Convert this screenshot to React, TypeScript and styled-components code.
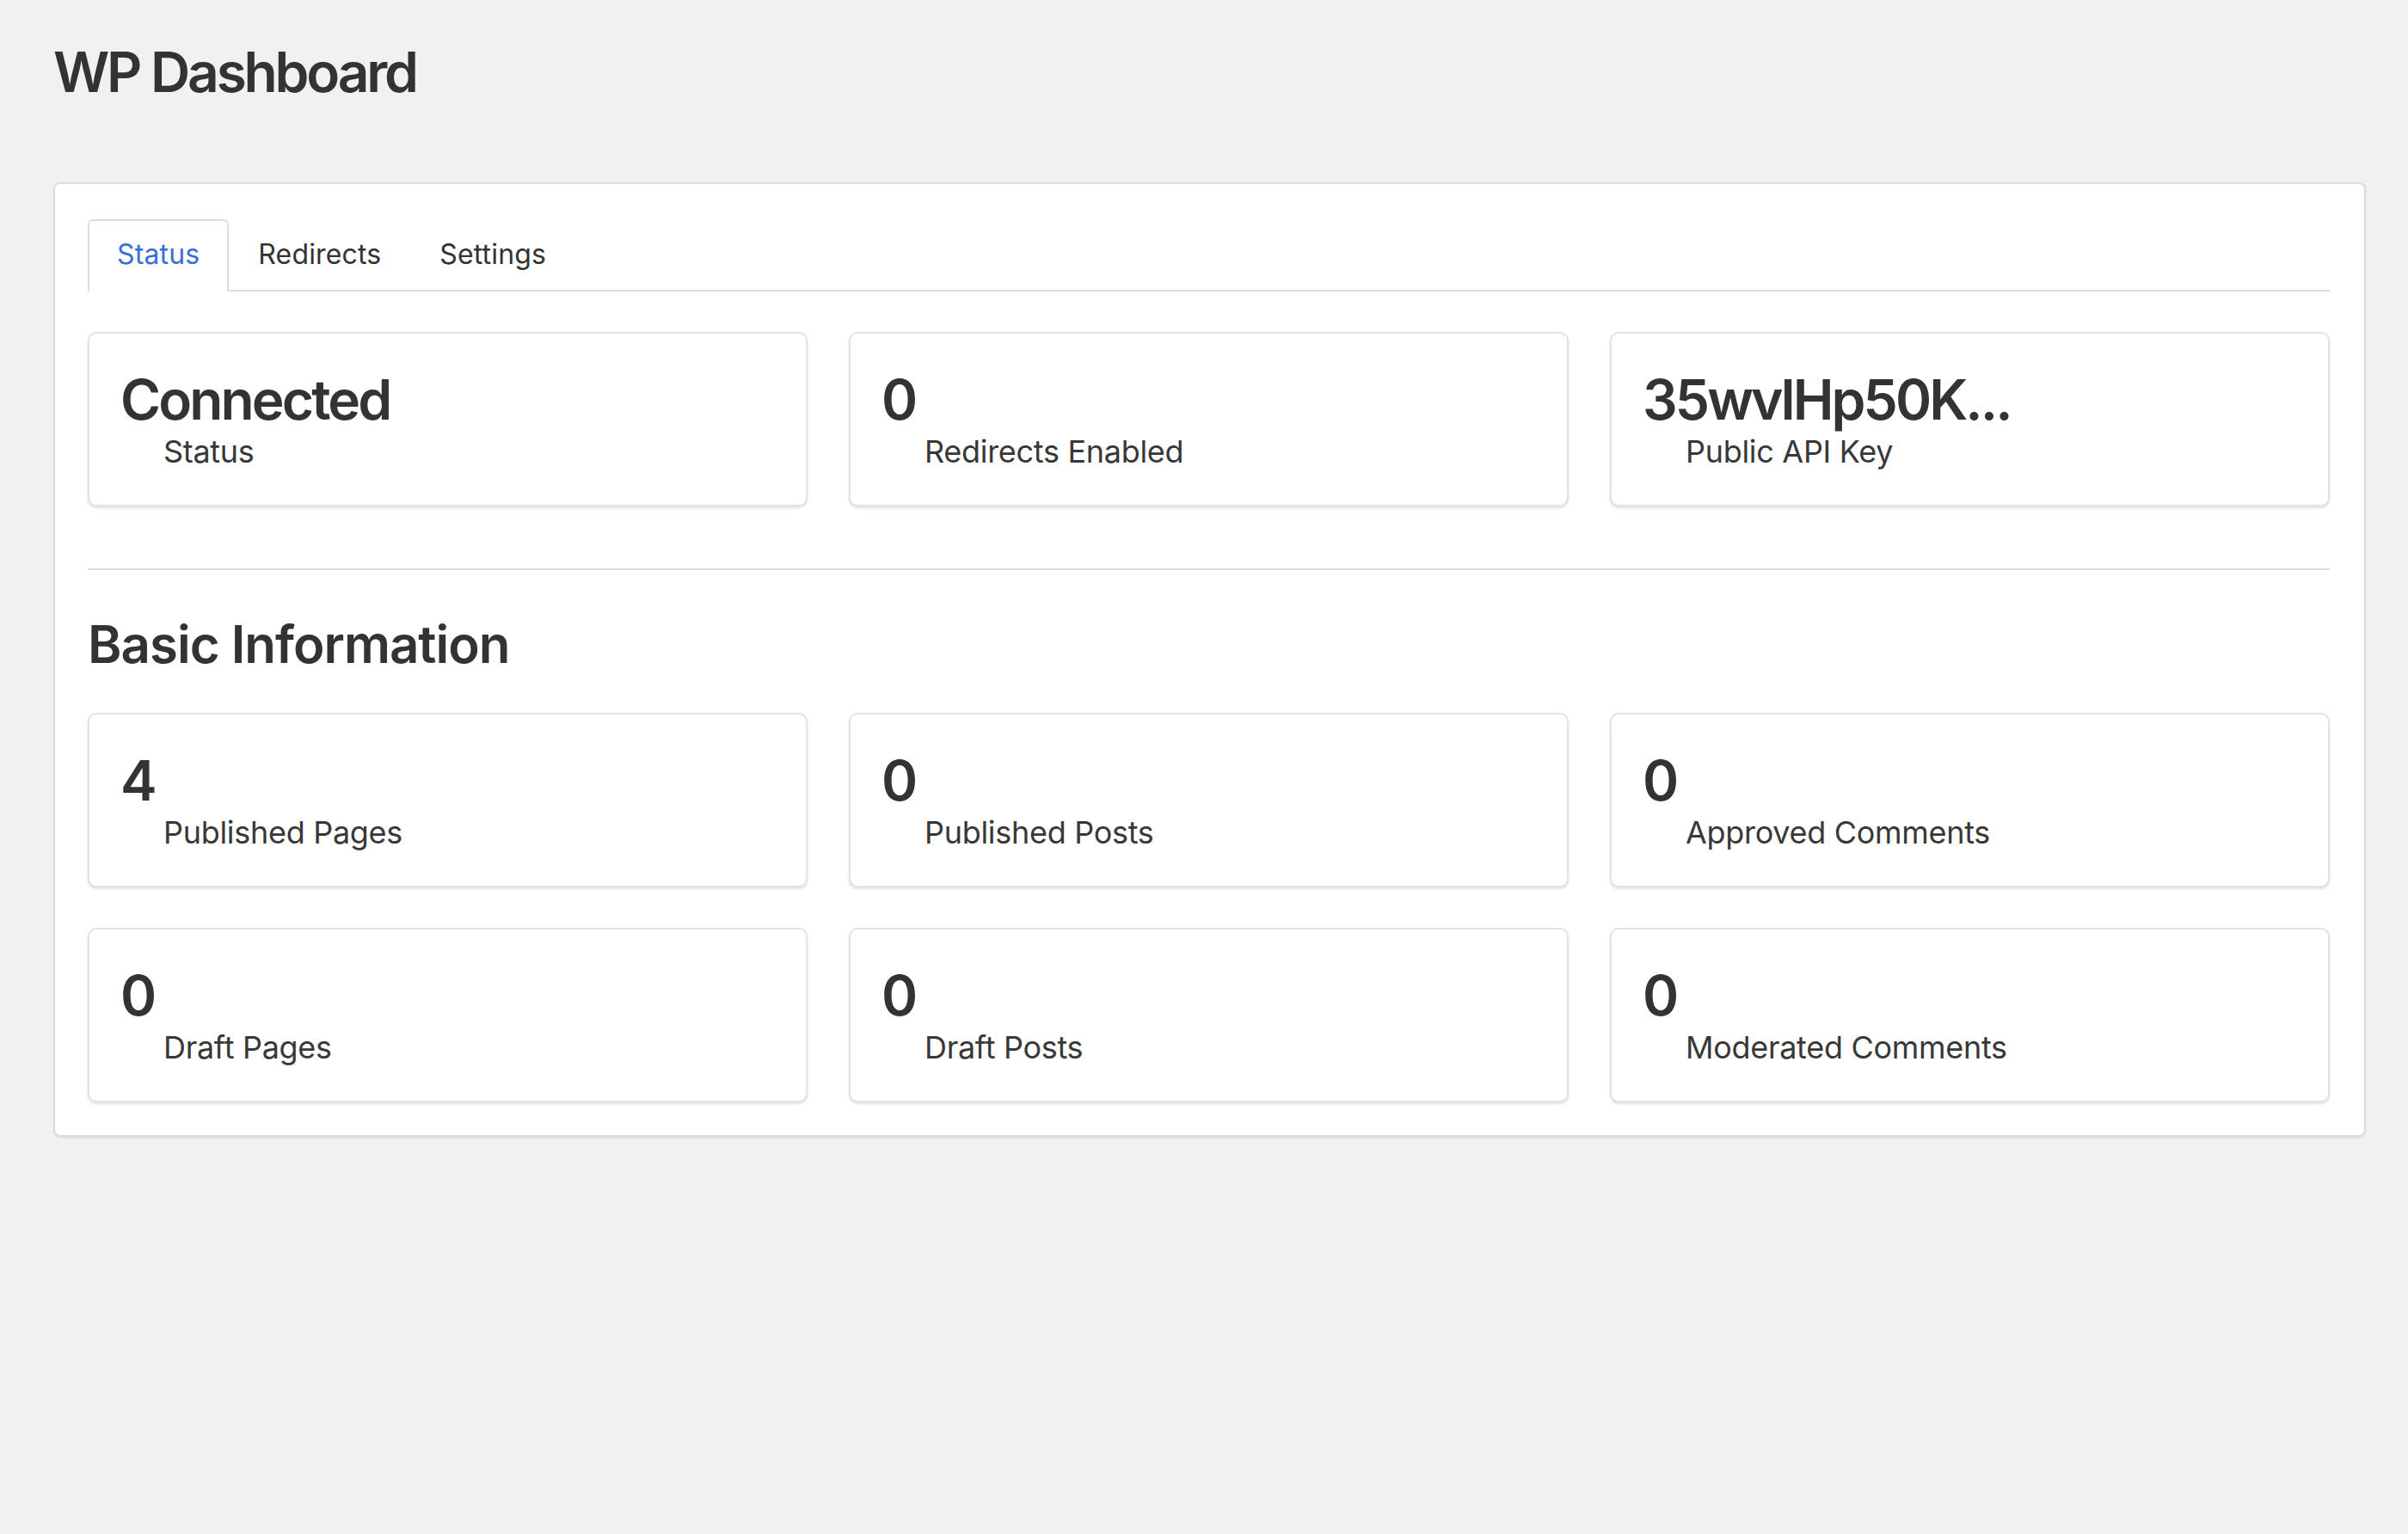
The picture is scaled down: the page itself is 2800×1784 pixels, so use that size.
import React from "react";
import styled, { createGlobalStyle } from "styled-components";

const GlobalStyle = createGlobalStyle`
  html, body {
    margin: 0;
    padding: 0;
    background: #f1f1f1;
  }
  body {
    font-family: Inter, "Noto Sans", "Liberation Sans", sans-serif;
    color: #333333;
  }
  * { box-sizing: border-box; }
`;

const Page = styled.div`
  min-height: 1784px;
  padding: 45px 49px 0 62px;
`;

const Title = styled.h1`
  margin: 0;
  font-size: 64px;
  line-height: 77px;
  font-weight: 600;
  letter-spacing: -3.2px;
  color: #333333;
`;

const Panel = styled.section`
  margin-top: 90px;
  background: #ffffff;
  border: 2px solid #dcdcdc;
  border-radius: 8px;
  box-shadow: 0 2px 2px rgba(0, 0, 0, 0.07);
  padding: 41px 40px 38px 38px;
`;

const TabBar = styled.nav`
  display: flex;
  align-items: flex-end;
  border-bottom: 2px solid #dddddd;
`;

const Tab = styled.button<{ $active?: boolean }>`
  appearance: none;
  font-family: inherit;
  font-size: 32px;
  letter-spacing: 0.15px;
  line-height: 78px;
  padding: 0 32px 4px;
  margin: 0 0 -2px 0;
  background: ${(p) => (p.$active ? "#ffffff" : "transparent")};
  color: ${(p) => (p.$active ? "#3b6fd6" : "#333333")};
  border: 2px solid ${(p) => (p.$active ? "#dddddd" : "transparent")};
  border-bottom: none;
  border-radius: 6px 6px 0 0;
  height: 84px;
  cursor: pointer;
`;

const CardGrid = styled.div<{ $top: number }>`
  display: grid;
  grid-template-columns: repeat(3, 1fr);
  column-gap: 48px;
  row-gap: 47px;
  margin-top: ${(p) => p.$top}px;
`;

const Card = styled.div`
  background: #ffffff;
  border: 2px solid #e3e3e3;
  border-radius: 10px;
  box-shadow: 0 2px 3px rgba(0, 0, 0, 0.12);
  padding: 41px 36px 40px 36px;
`;

const Value = styled.div`
  font-size: 64px;
  line-height: 72px;
  font-weight: 600;
  letter-spacing: -2.9px;
  color: #333333;
  white-space: nowrap;
`;

const Label = styled.div`
  margin-top: 2px;
  padding-left: 50px;
  font-size: 36px;
  line-height: 44px;
  font-weight: 400;
  letter-spacing: -0.3px;
  color: #383838;
`;

const Divider = styled.hr`
  margin: 72px 0 0 0;
  border: none;
  height: 2px;
  background: #dddddd;
`;

const SectionTitle = styled.h2`
  margin: 50px 0 0 0;
  font-size: 60px;
  line-height: 72px;
  font-weight: 600;
  letter-spacing: -1px;
  color: #333333;
`;

type Stat = { value: string; label: string };

const statusStats: Stat[] = [
  { value: "Connected", label: "Status" },
  { value: "0", label: "Redirects Enabled" },
  { value: "35wvlHp50K...", label: "Public API Key" },
];

const basicStats: Stat[] = [
  { value: "4", label: "Published Pages" },
  { value: "0", label: "Published Posts" },
  { value: "0", label: "Approved Comments" },
  { value: "0", label: "Draft Pages" },
  { value: "0", label: "Draft Posts" },
  { value: "0", label: "Moderated Comments" },
];

const StatCard = ({ value, label }: Stat) => (
  <Card>
    <Value>{value}</Value>
    <Label>{label}</Label>
  </Card>
);

export default function App() {
  return (
    <>
      <GlobalStyle />
      <Page>
        <Title>WP Dashboard</Title>
        <Panel>
          <TabBar>
            <Tab $active>Status</Tab>
            <Tab>Redirects</Tab>
            <Tab>Settings</Tab>
          </TabBar>
          <CardGrid $top={47}>
            {statusStats.map((s) => (
              <StatCard key={s.label} {...s} />
            ))}
          </CardGrid>
          <Divider />
          <SectionTitle>Basic Information</SectionTitle>
          <CardGrid $top={44}>
            {basicStats.map((s) => (
              <StatCard key={s.label} {...s} />
            ))}
          </CardGrid>
        </Panel>
      </Page>
    </>
  );
}
